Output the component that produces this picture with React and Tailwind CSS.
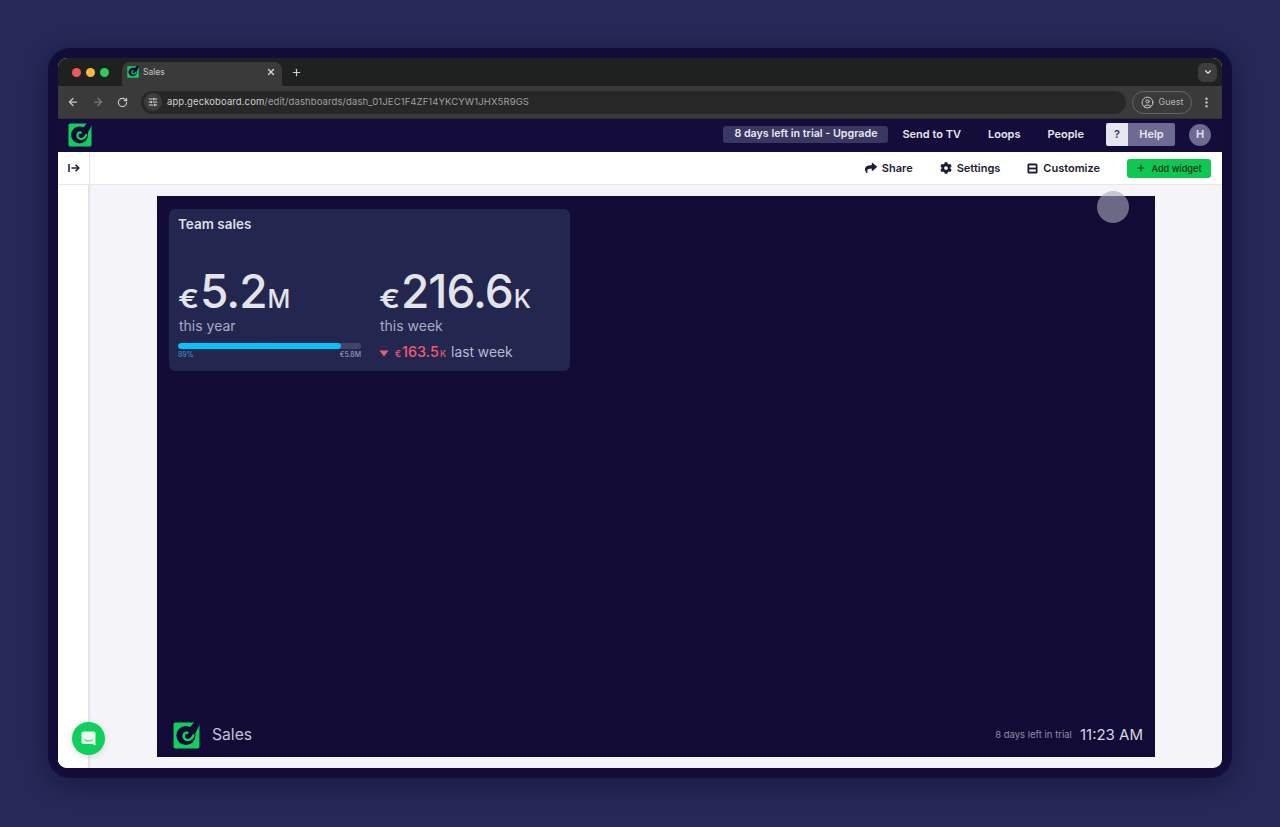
import React from 'react';
import { ArrowLeft, ArrowRight, RotateCw, X, Plus, ChevronDown, SlidersHorizontal, CircleUser, EllipsisVertical } from 'lucide-react';
import { FaShare, FaCog } from 'react-icons/fa';

function GeckoLogo({ size = 24 }) {
  return (
    <svg width={size} height={size} viewBox="0 0 24 24">
      <rect x="0.5" y="0.5" width="23" height="23" rx="1.5" fill="#10cf5c" />
      <circle cx="11.5" cy="12" r="8.5" fill="#120b36" />
      <path d="M19 0L24 0V1.5L19 12L14 6Z" fill="#120b36" />
      <path d="M12.8 9.6C9.8 8.8 8.2 12.8 10.6 15C13 17.2 16.8 15.8 18.2 12" fill="none" stroke="#10cf5c" strokeWidth="2.2" strokeLinecap="round" />
    </svg>
  );
}

function Stat({ big, unit, label }) {
  return (
    <div className="flex flex-col">
      <div className="flex items-baseline h-[46px] text-[#e3e3ea]">
        <span className="inline-block origin-left scale-x-[1.2] w-[19px] text-[26px] font-semibold leading-none mr-[3px]">€</span>
        <span className="text-[46px] font-medium leading-none tracking-[-1px]">{big}</span>
        <span className="text-[25px] font-medium leading-none ml-[1px]">{unit}</span>
      </div>
      <div className="mt-[2px] ml-[1px] text-[14px] leading-[20px] text-[#a9abc6]">{label}</div>
    </div>
  );
}

export default function App() {
  return (
    <div className="relative w-full h-[827px] overflow-hidden bg-[#262857] p-12 font-['Inter',sans-serif]">
      <div className="h-[730px] rounded-[22px] bg-[#120c38] p-[10px] shadow-[0_6px_24px_rgba(10,8,40,0.45)]">
        <div className="h-[710px] rounded-[9px] overflow-hidden flex flex-col bg-[#f5f5f9]">

          {/* browser tabs */}
          <div className="h-[28px] shrink-0 bg-[#1f2020] flex items-end pl-[14px] pr-[5px] relative">
            <div className="flex gap-[5px] self-center mr-[13px]">
              <span className="w-[9px] h-[9px] rounded-full bg-[#f0575a]" />
              <span className="w-[9px] h-[9px] rounded-full bg-[#f6b93b]" />
              <span className="w-[9px] h-[9px] rounded-full bg-[#2ecb55]" />
            </div>
            <div className="w-[160px] h-[24px] bg-[#3a3a3a] rounded-t-[8px] flex items-center pb-[4px] pl-[5px] pr-[6px] text-[8.5px] text-[#c4c4c4]">
              <GeckoLogo size={12} />
              <span className="ml-[4px]">Sales</span>
              <X className="ml-auto w-[10px] h-[10px] text-[#d8d8d8]" strokeWidth={3} />
            </div>
            <Plus className="self-center ml-[9px] w-[11px] h-[11px] text-[#d0d0d0]" strokeWidth={2.5} />
            <div className="ml-auto self-center w-[19px] h-[19px] rounded-[6px] bg-[#3d3d3d] flex items-center justify-center">
              <ChevronDown className="w-[10px] h-[10px] text-[#dcdcdc]" strokeWidth={3} />
            </div>
          </div>

          {/* browser toolbar */}
          <div className="h-[33px] shrink-0 bg-[#3a3a3a] flex items-center pl-[9px] pr-[9px] border-b border-[#2e2e2e]">
            <ArrowLeft className="w-[12px] h-[12px] text-[#c9c9c9]" strokeWidth={2.5} />
            <ArrowRight className="ml-[13px] w-[12px] h-[12px] text-[#7a7a7a]" strokeWidth={2.5} />
            <RotateCw className="ml-[13px] w-[11px] h-[11px] text-[#c9c9c9]" strokeWidth={2.5} />
            <div className="ml-[13px] w-[985px] h-[23px] rounded-full bg-[#272727] flex items-center pl-[3px]">
              <span className="w-[18px] h-[18px] rounded-full bg-[#3d3d3d] flex items-center justify-center">
                <SlidersHorizontal className="w-[10px] h-[10px] text-[#d8d8d8]" strokeWidth={2.5} />
              </span>
              <span className="ml-[5px] text-[9.5px] text-[#a0a0a0] tracking-[0.1px]"><span className="text-[#d0d0d0]">app.geckoboard.com</span>/edit/dashboards/dash_01JEC1F4ZF14YKCYW1JHX5R9GS</span>
            </div>
            <div className="ml-[6px] w-[60px] h-[23px] rounded-full border border-[#666] flex items-center justify-center gap-[5px] text-[9px] text-[#b4b4b4]">
              <CircleUser className="w-[13px] h-[13px] text-[#cfcfcf]" strokeWidth={1.8} />
              Guest
            </div>
            <EllipsisVertical className="ml-[8px] w-[13px] h-[13px] text-[#c9c9c9]" strokeWidth={2.5} />
          </div>

          {/* app nav */}
          <div className="h-[33px] shrink-0 bg-[#140c3a] flex items-center pb-[2px] pl-[10px] pr-[11px] text-[11px] font-semibold text-[#e6e6ee]">
            <GeckoLogo size={24} />
            <div className="ml-auto w-[165px] h-[17px] rounded-[3px] bg-[#3a3862] flex items-center justify-center text-[10.7px]">8 days left in trial - Upgrade</div>
            <span className="ml-[14px]">Send to TV</span>
            <span className="ml-[27px]">Loops</span>
            <span className="ml-[27px]">People</span>
            <div className="ml-[22px] flex h-[23px] w-[69px] rounded-[2px] overflow-hidden">
              <span className="w-[22px] bg-[#e6e6ee] text-[#3a3862] flex items-center justify-center">?</span>
              <span className="flex-1 bg-[#6d6b91] flex items-center justify-center">Help</span>
            </div>
            <span className="ml-[14px] w-[22px] h-[22px] rounded-full bg-[#6d6b91] flex items-center justify-center">H</span>
          </div>

          {/* sub nav */}
          <div className="h-[33px] shrink-0 bg-white flex items-center border-b border-[#e7e7ec] pr-[11px] text-[11px] font-semibold text-[#1d1b33]">
            <div className="w-[32px] h-full border-r border-[#e3e3e8] flex items-center justify-center">
              <svg width="12" height="12" viewBox="0 0 12 12" fill="none" stroke="#1d1b33" strokeWidth="1.5">
                <path d="M1 2V10" />
                <path d="M3.5 6H10.5" />
                <path d="M7.5 2.8L10.8 6L7.5 9.2" />
              </svg>
            </div>
            <FaShare className="ml-auto w-[12px] h-[12px] text-[#1d1b33]" />
            <span className="ml-[5px]">Share</span>
            <FaCog className="ml-[27px] w-[12px] h-[12px] text-[#1d1b33]" />
            <span className="ml-[5px]">Settings</span>
            <svg className="ml-[27px]" width="11" height="11" viewBox="0 0 11 11">
              <rect x="0.5" y="0.5" width="10" height="10" rx="1.5" fill="#1d1b33" />
              <rect x="2.2" y="2.4" width="6.6" height="2.2" fill="#fff" />
              <rect x="2.2" y="6.4" width="6.6" height="2.2" fill="#fff" />
            </svg>
            <span className="ml-[5px]">Customize</span>
            <div className="ml-[27px] w-[84px] h-[19px] rounded-[3px] bg-[#0fc852] flex items-center justify-center gap-[5px] text-[9.2px] font-medium text-[#10301c]">
              <Plus className="w-[10px] h-[10px]" strokeWidth={2.5} />
              <span className="translate-y-[1px]">Add widget</span>
            </div>
          </div>

          {/* body */}
          <div className="flex-1 flex min-h-0">
            <div className="w-[32px] shrink-0 bg-white border-r-2 border-[#e3e3e8]" />
            <div className="flex-1 pt-[11px] pl-[67px] pr-[67px] pb-[11px]">
              <div className="h-full bg-[#120b36] px-[12px] pt-[13px] pb-[8px] flex flex-col justify-between">
                <div className="w-[401px] h-[162px] rounded-[6px] bg-[#23264f] px-[9px] pt-[7px] flex flex-col">
                  <div className="text-[13.5px] leading-[17px] font-semibold text-[#dedfe8]">Team sales</div>
                  <div className="mt-[35px] flex">
                    <div className="w-[201px]">
                      <Stat big="5.2" unit="M" label="this year" />
                      <div className="mt-[7px] w-[183px] h-[6px] rounded-full bg-[#41436a] overflow-hidden">
                        <div className="w-[89%] h-full rounded-full bg-[#07c4f7]" />
                      </div>
                      <div className="w-[183px] flex justify-between text-[7px] leading-[9px] mt-[1px]">
                        <span className="text-[#3b9fcb]">89%</span>
                        <span className="text-[#a9abc6]">€5.8M</span>
                      </div>
                    </div>
                    <div>
                      <Stat big="216.6" unit="K" label="this week" />
                      <div className="mt-[6px] flex items-baseline text-[14px] leading-[20px]">
                        <svg className="mr-[6px] self-center" width="10" height="7" viewBox="0 0 10 7"><path d="M0.5 0.5H9.5L5 6.5Z" fill="#ee5a6f" /></svg>
                        <span className="text-[9px] font-medium text-[#ee5a6f]">€</span>
                        <span className="font-medium text-[#ee5a6f] ml-[1px] text-[14.4px]">163.5</span>
                        <span className="text-[9px] font-medium text-[#ee5a6f] ml-[1px]">K</span>
                        <span className="ml-[5px] text-[#b9bad0] text-[13.8px]">last week</span>
                      </div>
                    </div>
                  </div>
                </div>

                <div className="flex items-center h-[28px]">
                  <span className="ml-[4px]"><GeckoLogo size={27} /></span>
                  <span className="ml-[12px] text-[15.7px] text-[#c3c3d6]">Sales</span>
                  <span className="ml-auto text-[9.5px] text-[#8e8ca8]">8 days left in trial</span>
                  <span className="ml-[8px] text-[15px] text-[#d5d5e2]">11:23 AM</span>
                </div>
              </div>
            </div>
          </div>
        </div>
      </div>

      {/* cursor highlight */}
      <div className="absolute left-[1097px] top-[191px] w-[32px] h-[32px] rounded-full bg-[#a8a8bd]/60" />

      {/* chat bubble */}
      <div className="absolute left-[72px] top-[722px] w-[33px] h-[33px] rounded-full bg-[#10cf5c] flex items-center justify-center shadow-[0_1px_6px_rgba(0,0,0,0.15)]">
        <svg width="15" height="15" viewBox="0 0 15 15">
          <path d="M2.5 0.5H12.5C13.6 0.5 14.5 1.4 14.5 2.5V14.5L11.5 13H2.5C1.4 13 0.5 12.1 0.5 11V2.5C0.5 1.4 1.4 0.5 2.5 0.5Z" fill="#e9fbef" />
          <path d="M3.5 8.8C5.8 10.4 9.2 10.4 11.5 8.8" stroke="#10cf5c" strokeWidth="1" fill="none" strokeLinecap="round" />
        </svg>
      </div>
    </div>
  );
}
